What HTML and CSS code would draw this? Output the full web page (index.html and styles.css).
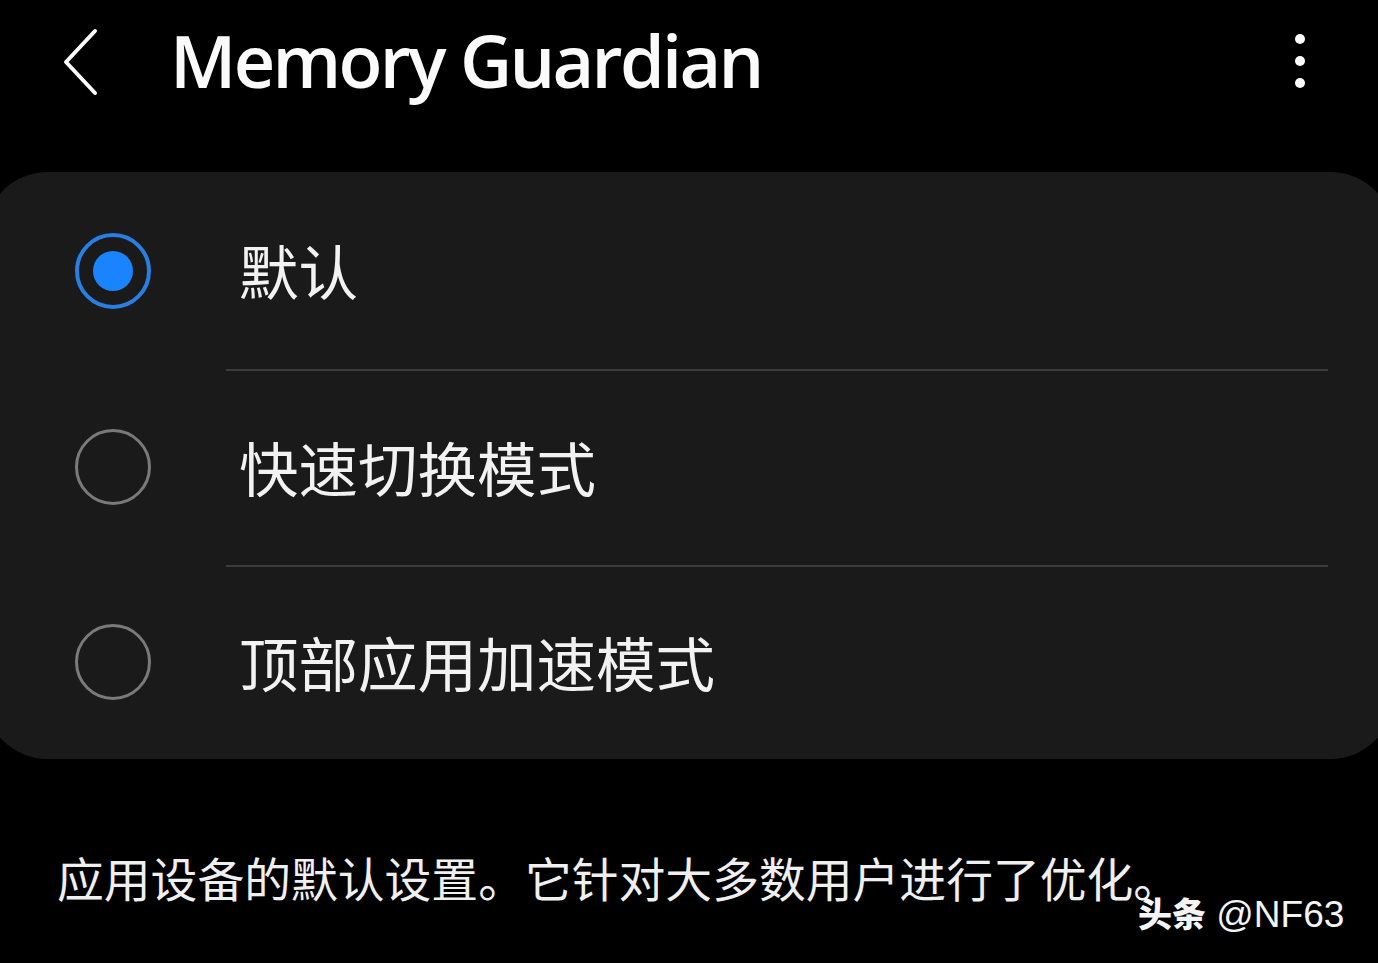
FILE: index.html
```html
<!DOCTYPE html>
<html lang="zh-CN">
<head>
<meta charset="utf-8">
<title>Memory Guardian</title>
<link rel="stylesheet" href="styles.css">
</head>
<body>
<div class="screen">
  <header class="appbar">
    <span class="back">
      <svg width="40" height="70" viewBox="0 0 40 70"><path d="M33 5 L4 36 L33 67" fill="none" stroke="#fff" stroke-width="4" stroke-linecap="round" stroke-linejoin="round"/></svg>
    </span>
    <h1 class="title">Memory Guardian</h1>
    <span class="more"><i></i><i></i><i></i></span>
  </header>

  <section class="card">
    <div class="row">
      <span class="radio radio-on"></span>
      <div class="label"><span>默认</span></div>
    </div>
    <div class="row">
      <span class="radio"></span>
      <div class="label sep"><span>快速切换模式</span></div>
    </div>
    <div class="row">
      <span class="radio"></span>
      <div class="label sep"><span>顶部应用加速模式</span></div>
    </div>
  </section>

  <p class="desc">应用设备的默认设置。它针对大多数用户进行了优化。</p>

  <div class="watermark"><b>头条</b> @NF63</div>
</div>
</body>
</html>
```

FILE: styles.css
```css
html, body {
  margin: 0;
  padding: 0;
  background: #000;
}
body {
  width: 1378px;
  height: 963px;
  overflow: hidden;
  font-family: "Noto Sans", "Noto Sans CJK SC", sans-serif;
  color: #f2f2f2;
}
.screen {
  position: relative;
  height: 963px;
  display: flex;
  flex-direction: column;
}
.appbar {
  height: 128px;
  display: flex;
  align-items: center;
  padding-left: 62px;
  padding-right: 73px;
}
.back {
  width: 40px;
  height: 70px;
  display: flex;
  margin-top: -6px;
}
.title {
  margin: 0 0 0 68px;
  font-size: 72px;
  font-weight: 600;
  letter-spacing: -2.7px;
  color: #fafafa;
  flex: 1;
  line-height: 1;
  margin-top: -8px;
  font-family: "Open Sans", "Noto Sans", sans-serif;
}
.more {
  display: flex;
  flex-direction: column;
  gap: 12px;
  margin-top: -6px;
}
.more i {
  display: block;
  width: 10px;
  height: 10px;
  border-radius: 50%;
  background: #fff;
}
.card {
  margin: 44px 0 0 -16px;
  width: 1410px;
  height: 587px;
  background: #1a1a1a;
  border-radius: 64px;
  display: grid;
  grid-template-rows: 197px 196px 194px;
}
.row {
  display: grid;
  grid-template-columns: 76px 1fr;
  column-gap: 75px;
  padding-left: 91px;
  padding-right: 66px;
}
.radio {
  align-self: center;
  width: 76px;
  height: 76px;
  box-sizing: border-box;
  border: 3px solid #7a7a7a;
  border-radius: 50%;
  display: flex;
  align-items: center;
  justify-content: center;
}
.radio-on {
  border: 4px solid #2a7de1;
}
.radio-on::after {
  content: "";
  width: 40px;
  height: 40px;
  border-radius: 50%;
  background: #1a84ff;
}
.label {
  display: flex;
  align-items: center;
  padding-left: 13px;
  font-family: "Noto Sans CJK SC", sans-serif;
  font-size: 59.5px;
  color: #f2f2f2;
}
.label span {
  margin-top: -4px;
}
.sep {
  border-top: 2.5px solid #3c3c3c;
}
.desc {
  margin: 90px 0 0 57px;
  font-family: "Noto Sans CJK SC", sans-serif;
  font-size: 46.8px;
  line-height: 1.2;
  color: #efefef;
}
.watermark {
  position: absolute;
  left: 1138px;
  top: 888px;
  font-family: "Liberation Sans", "Noto Sans CJK SC", sans-serif;
  font-size: 37px;
  color: #f4f4f4;
  white-space: nowrap;
}
.watermark b {
  font-family: "Noto Sans CJK SC", sans-serif;
  font-weight: 900;
  font-size: 34px;
}
```
